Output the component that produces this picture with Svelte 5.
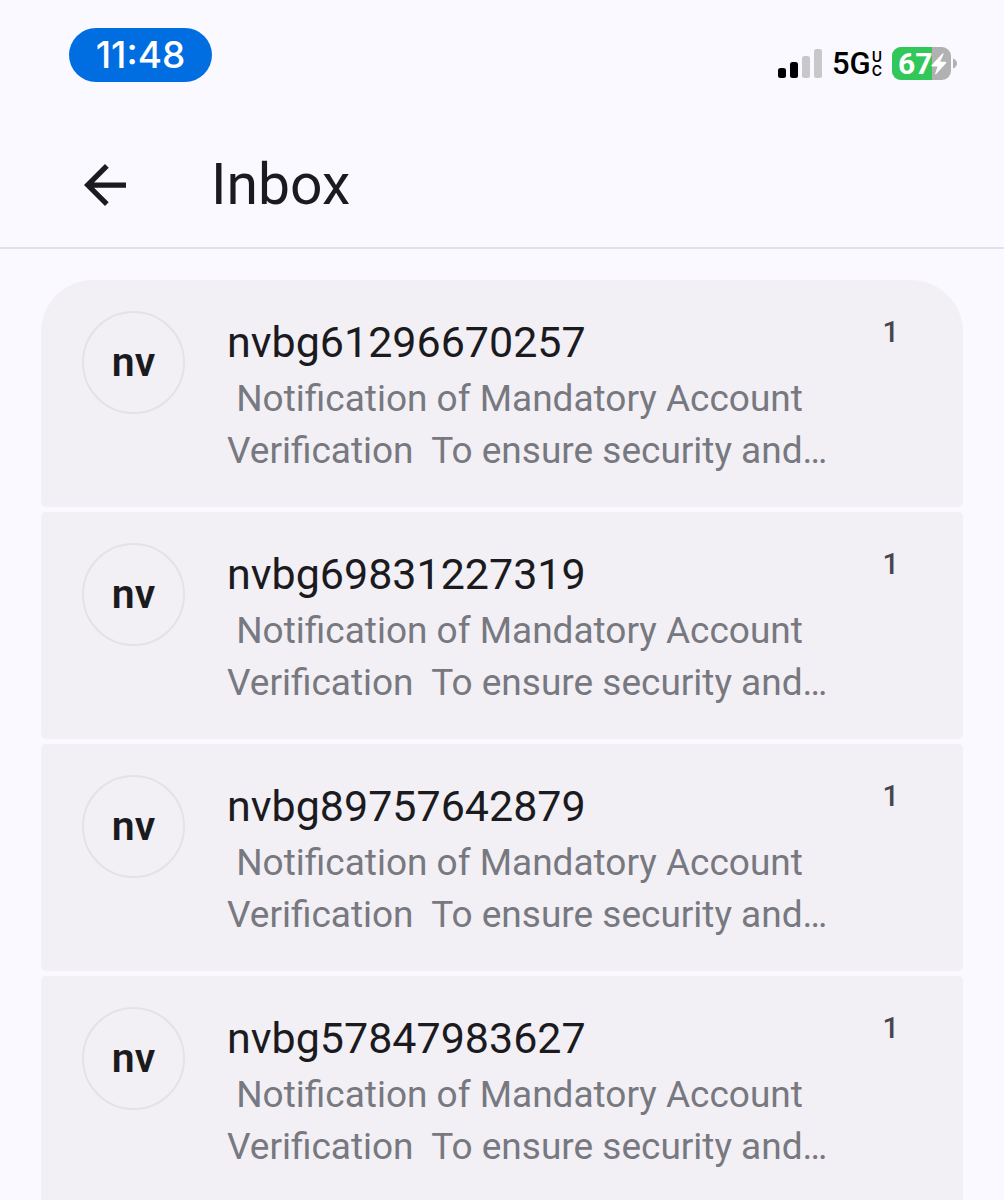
<!--
  Inbox screen: status bar, app bar and the list of conversations.
-->
<script lang="ts">
  interface Conversation {
    sender: string;
    preview: string;
    count: number;
  }

  const preview = ' Notification of Mandatory Account Verification  To ensure security and…';

  const conversations: Conversation[] = [
    { sender: 'nvbg61296670257', preview, count: 1 },
    { sender: 'nvbg69831227319', preview, count: 1 },
    { sender: 'nvbg89757642879', preview, count: 1 },
    { sender: 'nvbg57847983627', preview, count: 1 },
  ];

  const initials = (name: string) => name.slice(0, 2);
</script>

<div class="screen">
  <div class="status-bar">
    <span class="time">11:48</span>

    <div class="indicators">
      <svg class="signal" viewBox="0 0 44 30" width="44" height="30" aria-hidden="true">
        <rect x="0" y="19" width="8" height="10" rx="2.5" fill="#000" />
        <rect x="12" y="13" width="8" height="16" rx="2.5" fill="#000" />
        <rect x="24" y="7" width="8" height="22" rx="2.5" fill="#c8c8cb" />
        <rect x="36" y="0" width="8" height="29" rx="2.5" fill="#c8c8cb" />
      </svg>

      <div class="network">
        <span>5G</span>
        <span class="network-kind"><span>U</span><span>C</span></span>
      </div>

      <div class="battery">
        <svg viewBox="0 0 66 34" width="66" height="34" aria-hidden="true">
          <clipPath id="battery-body">
            <rect width="59" height="33" rx="9" />
          </clipPath>
          <g clip-path="url(#battery-body)">
            <rect width="59" height="33" fill="#b1b1b3" />
            <rect width="40" height="33" fill="#32c759" />
          </g>
          <path d="M61 11.5c2.400 .8 4 2.700 4 5s-1.600 4.200-4 5z" fill="#b1b1b3" />
          <path
            d="M50.500 6.500L39.700 18.100c-.6.7-.3 1.400.5 1.400h5.400L43.200 26.500c-.3.9.5 1.200 1.100.6L54 16.200c.6-.7.3-1.500-.5-1.500h-5.300L51.500 7.200c.3-.8-.4-1.300-1-.7z"
            fill="#fff"
          />
        </svg>
        <span class="battery-level">67</span>
      </div>
    </div>
  </div>

  <header class="app-bar">
    <button class="back-button" aria-label="Back">
      <svg viewBox="4 4 16 16" width="42" height="42" aria-hidden="true">
        <path fill="currentColor" d="M20 11H7.830l5.590-5.590L12 4l-8 8 8 8 1.410-1.410L7.830 13H20v-2z" />
      </svg>
    </button>
    <h1>Inbox</h1>
  </header>

  <main class="list">
    {#each conversations as conversation (conversation.sender)}
      <a class="row" href="#{conversation.sender}">
        <span class="avatar" aria-hidden="true">{initials(conversation.sender)}</span>
        <span class="body">
          <span class="sender">{conversation.sender}</span>
          <span class="preview">{conversation.preview}</span>
        </span>
        <span class="count">{conversation.count}</span>
      </a>
    {/each}
  </main>
</div>

<style>
  :global(body) {
    background: #faf9ff;
  }

  .screen {
    height: 100vh;
    overflow: hidden;
    display: flex;
    flex-direction: column;
    font-family: Roboto, 'Liberation Sans', sans-serif;
    color: #1b1b1f;
    background: #faf9ff;
  }

  /* Status bar */
  .status-bar {
    flex: none;
    display: flex;
    justify-content: space-between;
    align-items: flex-start;
    padding: 28px 46px 0 69px;
  }

  .time {
    width: 143px;
    line-height: 54px;
    border-radius: 27px;
    background: #006ee0;
    color: #fff;
    font-family: Inter, sans-serif;
    font-size: 37px;
    font-weight: 500;
    text-align: center;
  }

  .indicators {
    display: flex;
    align-items: center;
    gap: 10px;
    padding-top: 18px;
    color: #000;
  }

  .network {
    display: flex;
    align-items: center;
    gap: 1px;
    font-size: 31px;
    font-weight: 500;
    line-height: 36px;
  }

  .network-kind {
    display: flex;
    flex-direction: column;
    align-items: center;
    font-family: Inter, sans-serif;
    font-size: 14px;
    font-weight: 600;
    line-height: 14px;
  }

  .battery {
    position: relative;
    height: 34px;
  }

  .battery-level {
    position: absolute;
    inset: 0 auto 0 6px;
    color: #fff;
    font-size: 30px;
    font-weight: 700;
    line-height: 34px;
  }

  /* App bar */
  .app-bar {
    flex: none;
    display: flex;
    align-items: center;
    gap: 85px;
    height: 124px;
    padding: 41px 84px 0;
    border-bottom: 2px solid #e2e1e8;
  }

  .back-button {
    display: flex;
    padding: 0;
    border: none;
    background: none;
    color: inherit;
    cursor: pointer;
  }

  h1 {
    margin: 0;
    font-size: 57px;
    font-weight: 400;
    line-height: 72px;
  }

  /* Conversations */
  .list {
    flex: 1;
    min-height: 0;
    display: flex;
    flex-direction: column;
    gap: 5px;
    padding: 31px 41px 0;
  }

  .row {
    flex: none;
    display: flex;
    align-items: flex-start;
    padding: 31px 64px 30px 41px;
    border-radius: 5px;
    background: #f2f0f5;
    color: inherit;
    text-decoration: none;
  }

  .row:first-child {
    border-radius: 52px 52px 5px 5px;
  }

  .avatar {
    flex: none;
    box-sizing: border-box;
    width: 103px;
    height: 103px;
    margin-right: 42px;
    border: 2px solid #e3e2e7;
    border-radius: 50%;
    font-size: 41px;
    font-weight: 600;
    line-height: 99px;
    text-align: center;
  }

  .body {
    flex: 1;
    min-width: 0;
    display: flex;
    flex-direction: column;
  }

  .sender {
    font-size: 43px;
    line-height: 62px;
  }

  .preview {
    color: #777880;
    font-size: 37px;
    line-height: 52px;
    white-space: pre-wrap;
  }

  .count {
    color: #46464f;
    font-size: 29px;
    font-weight: 500;
    line-height: 42px;
  }
</style>
